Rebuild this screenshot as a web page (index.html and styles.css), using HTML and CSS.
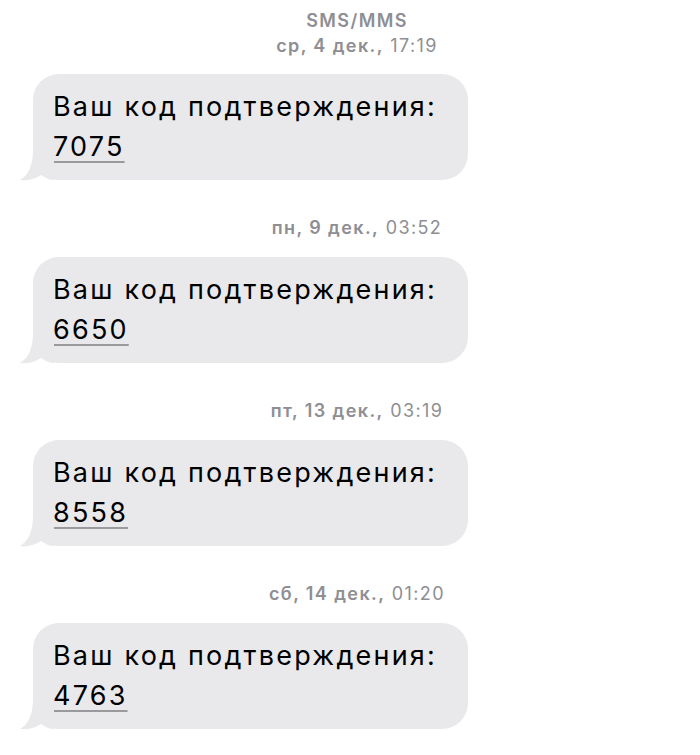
FILE: index.html
```html
<!DOCTYPE html>
<html lang="ru">
<head>
    <meta charset="UTF-8">
    <meta name="viewport" content="width=device-width, initial-scale=1.0">
    <title>SMS/MMS</title>
    <link rel="stylesheet" href="styles.css">
</head>
<body>

    <div class="thread">
        <div class="stamp stamp-first">
            <div class="service">SMS/MMS</div>
            <div><b>ср, 4 дек.,</b> 17:19</div>
        </div>
        <div class="bubble">
            Ваш код подтверждения:<br><span class="code">7075</span>
            <svg class="tail" width="34" height="32" viewBox="0 0 34 32"><path d="M13 0 C13 14 9 25 0 30 C8 31 15 29 21 25 C25 28 30 30 34 30 L34 0 Z"/></svg>
        </div>

        <div class="stamp"><b>пн, 9 дек.,</b> 03:52</div>
        <div class="bubble">
            Ваш код подтверждения:<br><span class="code">6650</span>
            <svg class="tail" width="34" height="32" viewBox="0 0 34 32"><path d="M13 0 C13 14 9 25 0 30 C8 31 15 29 21 25 C25 28 30 30 34 30 L34 0 Z"/></svg>
        </div>

        <div class="stamp"><b>пт, 13 дек.,</b> 03:19</div>
        <div class="bubble">
            Ваш код подтверждения:<br><span class="code">8558</span>
            <svg class="tail" width="34" height="32" viewBox="0 0 34 32"><path d="M13 0 C13 14 9 25 0 30 C8 31 15 29 21 25 C25 28 30 30 34 30 L34 0 Z"/></svg>
        </div>

        <div class="stamp"><b>сб, 14 дек.,</b> 01:20</div>
        <div class="bubble">
            Ваш код подтверждения:<br><span class="code">4763</span>
            <svg class="tail" width="34" height="32" viewBox="0 0 34 32"><path d="M13 0 C13 14 9 25 0 30 C8 31 15 29 21 25 C25 28 30 30 34 30 L34 0 Z"/></svg>
        </div>
    </div>

</body>
</html>
```

FILE: styles.css
```css
/* Лента сообщений */
body {
    margin: 0;
    background: #fff;
    font-family: 'Inter', 'Roboto', sans-serif;
    color: #000;
}

.thread {
    width: 700px;
    overflow: hidden;
}

/* Дата и время над сообщением */
.stamp {
    width: 714px;
    text-align: center;
    font-size: 18px;
    letter-spacing: 1.4px;
    line-height: 25px;
    color: #8e8e93;
    margin: 35px 0 17px;
}

.stamp b {
    font-weight: 600;
}

.stamp-first {
    margin-top: 8px;
    margin-bottom: 16px;
}

.service {
    font-weight: 600;
}

/* Пузырь входящего сообщения */
.bubble {
    position: relative;
    width: 435px;
    box-sizing: border-box;
    margin-left: 33px;
    padding: 13px 20px;
    background: #e9e9eb;
    border-radius: 26px;
    font-size: 27px;
    letter-spacing: 2.2px;
    line-height: 40px;
}

.code {
    text-decoration: underline;
    text-decoration-color: #9a9a9e;
    text-decoration-thickness: 2px;
    text-underline-offset: 5px;
}

.tail {
    position: absolute;
    left: -13px;
    bottom: -2px;
    fill: #e9e9eb;
}
```
